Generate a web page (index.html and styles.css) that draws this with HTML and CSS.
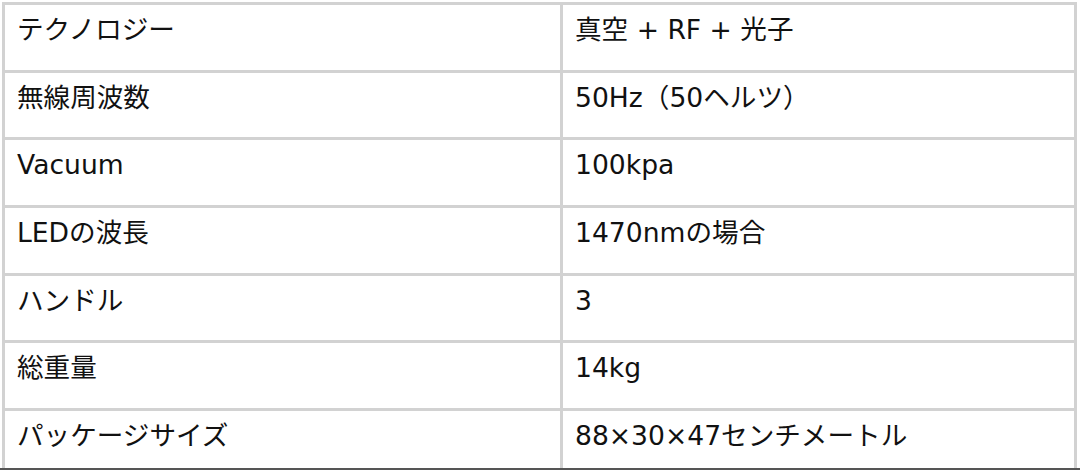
FILE: index.html
```html
<!DOCTYPE html>
<html lang="ja">
<head>
<meta charset="utf-8">
<link rel="stylesheet" href="styles.css">
</head>
<body>
<div class="wrap">
<table class="spec">
<tbody>
<tr><td class="k">テクノロジー</td><td class="v">真空 + RF + 光子</td></tr>
<tr><td class="k">無線周波数</td><td class="v">50Hz（50ヘルツ）</td></tr>
<tr><td class="k">Vacuum</td><td class="v">100kpa</td></tr>
<tr><td class="k">LEDの波長</td><td class="v">1470nmの場合</td></tr>
<tr><td class="k">ハンドル</td><td class="v">3</td></tr>
<tr><td class="k">総重量</td><td class="v">14kg</td></tr>
<tr><td class="k">パッケージサイズ</td><td class="v">88×30×47センチメートル</td></tr>
</tbody>
</table>
</div>
</body>
</html>
```

FILE: styles.css
```css
html, body {
  margin: 0;
  padding: 0;
  background: #ffffff;
  overflow: hidden;
}
body {
  width: 1080px;
  height: 470px;
  position: relative;
}
.wrap {
  padding: 2px 3px 0 2px;
}
.spec {
  width: 1075px;
  border-collapse: collapse;
  table-layout: fixed;
  font-family: "DejaVu Sans", "Noto Sans CJK JP", sans-serif;
  font-size: 26.6px;
  color: #111111;
}
.spec td {
  border: 3px solid #d2d2d2;
  height: 67.7px;
  padding: 7px 12px 0 12px;
  box-sizing: border-box;
  vertical-align: top;
  line-height: 36px;
  white-space: nowrap;
}
.spec td.k {
  width: 558px;
}
body::after {
  content: "";
  position: absolute;
  left: 0;
  right: 0;
  bottom: 0;
  height: 2px;
  background: #555555;
}
```
